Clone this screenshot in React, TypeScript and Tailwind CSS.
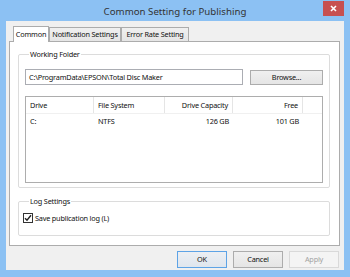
import React from "react";

const font = "font-['Noto_Sans',_'Liberation_Sans',_sans-serif]";

type Column = { label: string; width: string; align: "left" | "right" };

const columns: Column[] = [
  { label: "Drive", width: "w-[68px]", align: "left" },
  { label: "File System", width: "w-[71px]", align: "left" },
  { label: "Drive Capacity", width: "w-[68px]", align: "right" },
  { label: "Free", width: "w-[70px]", align: "right" },
];

const rows = [["C:", "NTFS", "126 GB", "101 GB"]];

function Tab({ label, active, width }: { label: string; active?: boolean; width: string }) {
  return (
    <div
      className={`${width} flex items-center justify-center border border-[#acacac] whitespace-nowrap ${
        active
          ? "h-[16px] bg-white border-b-0 relative z-10 -mb-px"
          : "h-[14px] bg-gradient-to-b from-[#f0f0f0] to-[#e5e5e5] border-b-0"
      }`}
    >
      {label}
    </div>
  );
}

function Button({ label, primary, disabled }: { label: string; primary?: boolean; disabled?: boolean }) {
  return (
    <button
      className={`w-[50px] h-[17px] flex items-center justify-center border ${
        disabled
          ? "bg-[#f4f4f4] border-[#d9d9d9] text-[#a3a3a3]"
          : primary
          ? "bg-gradient-to-b from-[#eceff3] to-[#dfe6ee] border-[#5da3e6]"
          : "bg-gradient-to-b from-[#f0f0f0] to-[#e5e5e5] border-[#acacac]"
      }`}
    >
      {label}
    </button>
  );
}

export default function App() {
  return (
    <div
      className={`w-[350px] h-[277px] bg-[#8cc1f3] flex flex-col text-[7.3px] tracking-[-0.2px] leading-[11px] text-[#111] ${font}`}
    >
      {/* title bar */}
      <div className="h-[21px] relative flex items-center justify-center">
        <span className="text-[9.7px] tracking-normal text-[#333] pt-[2px]">Common Setting for Publishing</span>
        <div className="absolute right-[6px] top-[1px] w-[21px] h-[15px] bg-[#c75050] flex items-center justify-center">
          <svg width="7" height="7" viewBox="0 0 7 7">
            <path d="M1 1 L6 6 M6 1 L1 6" stroke="white" strokeWidth="1.6" />
          </svg>
        </div>
      </div>

      {/* client */}
      <div className="mx-[6px] h-[249px] bg-[#f0f0f0] flex flex-col pl-[3px] pr-[4px] pt-[4px]">
        <div className="flex items-end pl-[4px] h-[16px]">
          <Tab label="Common" active width="w-[36px]" />
          <Tab label="Notification Settings" width="w-[72px]" />
          <Tab label="Error Rate Setting" width="w-[68px]" />
        </div>

        <div className="h-[205px] border border-[#acacac] bg-white pl-[8px] pr-[9px] pt-[7px]">
          <fieldset className="border border-[#dcdcdc] rounded-[2px] px-[6px] pb-[4px]">
            <legend className="ml-[4px] px-[1px]">Working Folder</legend>
            <div className="flex gap-[7px] mt-[9px]">
              <div className="w-[218px] h-[16px] border border-[#abadb3] bg-white flex items-center pl-[3px]">
                C:\ProgramData\EPSON\Total Disc Maker
              </div>
              <button className="w-[73px] h-[15px] mt-[1px] flex items-center justify-center border border-[#acacac] bg-gradient-to-b from-[#f0f0f0] to-[#e5e5e5]">
                Browse...
              </button>
            </div>
            <div className="mt-[11px] h-[87px] border border-[#adadad] bg-white">
              <div className="flex h-[17px] border-b border-[#f0f0f0]">
                {columns.map((c) => (
                  <div
                    key={c.label}
                    className={`${c.width} h-full border-r border-[#e5e5e5] flex items-center px-[4px] ${
                      c.align === "right" ? "justify-end" : "justify-start"
                    }`}
                  >
                    {c.label}
                  </div>
                ))}
              </div>
              {rows.map((r) => (
                <div key={r[0]} className="flex h-[14px] items-center">
                  {r.map((v, i) => (
                    <div
                      key={i}
                      className={`${columns[i].width} px-[4px] ${
                        columns[i].align === "right" ? "text-right" : "text-left"
                      }`}
                    >
                      {v}
                    </div>
                  ))}
                </div>
              ))}
            </div>
          </fieldset>

          <fieldset className="mt-[8px] border border-[#dcdcdc] rounded-[2px] pl-[4px] pb-[11px]">
            <legend className="ml-[6px] px-[1px]">Log Settings</legend>
            <div className="flex items-center gap-[2px] mt-[5px] h-[12px]">
              <div className="w-[10px] h-[10px] border border-[#333] bg-white flex items-center justify-center">
                <svg width="8" height="8" viewBox="0 0 8 8">
                  <path d="M1 4.2 L3 6.3 L7 1.3" stroke="#222" strokeWidth="1.4" fill="none" />
                </svg>
              </div>
              <span>Save publication log (L)</span>
            </div>
          </fieldset>
        </div>

        <div className="flex justify-end gap-[6px] mt-[5px] mr-[1px]">
          <Button label="OK" primary />
          <Button label="Cancel" />
          <Button label="Apply" disabled />
        </div>
      </div>
    </div>
  );
}
